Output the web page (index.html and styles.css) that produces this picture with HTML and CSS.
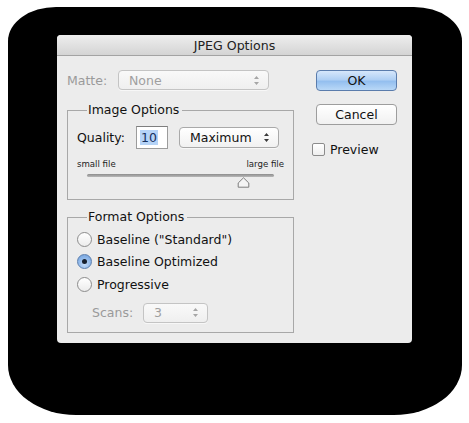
FILE: index.html
```html
<!DOCTYPE html>
<html>
<head>
<meta charset="utf-8">
<link rel="stylesheet" href="styles.css">
</head>
<body>
<div class="backdrop">
  <div class="dialog">
    <div class="titlebar">JPEG Options</div>
    <div class="body">
      <div class="left">
        <div class="row matte">
          <span class="lbl disabled">Matte:</span>
          <div class="select disabled w-matte">
            <span>None</span>
            <svg class="arrows" width="5" height="9" viewBox="0 0 5 9"><path d="M2.5 0 L5 3 L0 3 Z M2.5 9 L5 6 L0 6 Z"/></svg>
          </div>
        </div>
        <fieldset class="group image">
          <legend>Image Options</legend>
          <div class="row quality">
            <span class="lbl">Quality:</span>
            <div class="input"><span class="sel">10</span></div>
            <div class="select w-max">
              <span>Maximum</span>
              <svg class="arrows" width="5" height="9" viewBox="0 0 5 9"><path d="M2.5 0 L5 3 L0 3 Z M2.5 9 L5 6 L0 6 Z"/></svg>
            </div>
          </div>
          <div class="slider-labels"><span>small file</span><span>large file</span></div>
          <div class="slider">
            <div class="track"></div>
            <svg class="thumb" style="left:150px" width="13" height="11" viewBox="0 0 13 11"><path d="M6.5 0.8 L11.8 6 L11.8 10.2 L1.2 10.2 L1.2 6 Z" fill="#f4f4f4" stroke="#7d7d7d" stroke-width="1"/></svg>
          </div>
        </fieldset>
        <fieldset class="group format">
          <legend>Format Options</legend>
          <div class="radio"><span class="circle"></span><span>Baseline ("Standard")</span></div>
          <div class="radio"><span class="circle on"><span class="dot"></span></span><span>Baseline Optimized</span></div>
          <div class="radio"><span class="circle"></span><span>Progressive</span></div>
          <div class="row scans">
            <span class="lbl disabled">Scans:</span>
            <div class="select disabled w-scans">
              <span>3</span>
              <svg class="arrows" width="5" height="9" viewBox="0 0 5 9"><path d="M2.5 0 L5 3 L0 3 Z M2.5 9 L5 6 L0 6 Z"/></svg>
            </div>
          </div>
        </fieldset>
      </div>
      <div class="right">
        <div class="btn ok">OK</div>
        <div class="btn cancel">Cancel</div>
        <div class="check"><span class="box"></span><span>Preview</span></div>
      </div>
    </div>
  </div>
</div>
</body>
</html>
```

FILE: styles.css
```css
html, body {
  margin: 0;
  padding: 0;
  background: #fff;
}
body {
  width: 469px;
  height: 423px;
  overflow: hidden;
  font-family: "DejaVu Sans", sans-serif;
  font-size: 12.5px;
  color: #111;
}
.backdrop {
  box-sizing: border-box;
  margin: 7px 0 0 8px;
  width: 454px;
  height: 408px;
  background: #000;
  border-radius: 48px 48px 68px 68px / 34px 34px 50px 50px;
  padding: 28px 0 0 49px;
}
.dialog {
  width: 355px;
  height: 308px;
  background: #ececec;
  border-radius: 4px;
  overflow: hidden;
}
.titlebar {
  height: 20px;
  border-bottom: 1px solid #a3a3a3;
  background: linear-gradient(#eeeeee, #d4d4d4);
  text-align: center;
  line-height: 21px;
  font-size: 12.6px;
  color: #222;
}
.body {
  display: flex;
  padding: 14px 0 0 10px;
}
.left {
  width: 227px;
}
.right {
  margin-left: 18px;
  width: 85px;
  display: flex;
  flex-direction: column;
}
.row {
  display: flex;
  align-items: center;
}
.lbl.disabled {
  color: #9a9a9a;
}
.matte {
  height: 20px;
}
.matte .lbl {
  width: 51px;
}
.select {
  box-sizing: border-box;
  height: 20px;
  display: flex;
  align-items: center;
  justify-content: space-between;
  padding: 0 9px 0 10px;
  border: 1px solid #a9a9a9;
  border-radius: 4px;
  background: linear-gradient(#ffffff, #f1f1f1);
  box-shadow: 0 1px 0 rgba(255,255,255,0.6);
}
.select .arrows {
  fill: #3a3a3a;
}
.select.disabled {
  border-color: #c4c4c4;
  color: #9f9f9f;
  background: linear-gradient(#f9f9f9, #efefef);
}
.select.disabled .arrows {
  fill: #a6a6a6;
}
.w-matte {
  width: 151px;
}
.w-max {
  width: 100px;
  height: 21px;
  margin-left: 11px;
}
.w-scans {
  width: 65px;
}
.group {
  box-sizing: border-box;
  margin: 0;
  padding: 0 9px 0 9px;
  width: 227px;
  border: 1px solid #a8a8a8;
  min-inline-size: 0;
}
.group legend {
  margin-left: 10px;
  padding: 0 3px 0 1px;
  line-height: 16px;
  height: 16px;
  font-size: 12.5px;
}
.image {
  margin-top: 12px;
  height: 98px;
  padding-top: 8px;
}
.format {
  margin-top: 9px;
  height: 124px;
  padding-top: 3px;
}
.quality {
  height: 23px;
}
.quality .lbl {
  width: 59px;
}
.input {
  box-sizing: border-box;
  width: 32px;
  height: 23px;
  background: #fff;
  border: 1px solid #9c9c9c;
  border-top-color: #7e7e7e;
  padding: 3px 0 0 3px;
  line-height: 15px;
}
.input .sel {
  display: inline-block;
  background: #b5d3f7;
  color: #18305e;
  padding: 0 1px 0 1px;
}
.slider-labels {
  margin-top: 10px;
  display: flex;
  justify-content: space-between;
  font-size: 8.6px;
  line-height: 10px;
  height: 10px;
  color: #222;
}
.slider {
  position: relative;
  margin: 5px 10px 0 10px;
  height: 14px;
}
.track {
  height: 3px;
  border-radius: 2px;
  background: linear-gradient(#8c8c8c, #b8b8b8);
}
.thumb {
  position: absolute;
  top: 3px;
}
.radio {
  display: flex;
  align-items: center;
  height: 22.5px;
}
.circle {
  box-sizing: border-box;
  width: 15px;
  height: 15px;
  border-radius: 50%;
  border: 1px solid #8c8c8c;
  background: linear-gradient(#ffffff, #ececec);
  margin-right: 5px;
  display: flex;
  align-items: center;
  justify-content: center;
  flex: none;
}
.circle.on {
  border-color: #5c7fae;
  background: radial-gradient(circle at 50% 70%, #c5ddf9 0%, #8ab4e8 60%, #6f9cd6 100%);
}
.dot {
  width: 5px;
  height: 5px;
  border-radius: 50%;
  background: #16202e;
}
.scans {
  margin-top: 7px;
  height: 20px;
  padding-left: 15px;
}
.scans .lbl {
  width: 51px;
}
.btn {
  box-sizing: border-box;
  margin-left: 4px;
  width: 81px;
  height: 21px;
  border-radius: 4px;
  text-align: center;
  line-height: 19px;
}
.ok {
  border: 1px solid #5a7cac;
  background: linear-gradient(#d6e7fb 0%, #b0d0f4 45%, #94bfef 55%, #b9d8f7 100%);
}
.cancel {
  margin-top: 13px;
  border: 1px solid #9d9d9d;
  background: linear-gradient(#ffffff, #f1f1f1);
}
.check {
  margin-top: 18px;
  display: flex;
  align-items: center;
  height: 13px;
}
.check .box {
  box-sizing: border-box;
  width: 13px;
  height: 13px;
  border: 1px solid #8c8c8c;
  border-radius: 2px;
  background: linear-gradient(#ffffff, #efefef);
  margin-right: 5px;
}
```
